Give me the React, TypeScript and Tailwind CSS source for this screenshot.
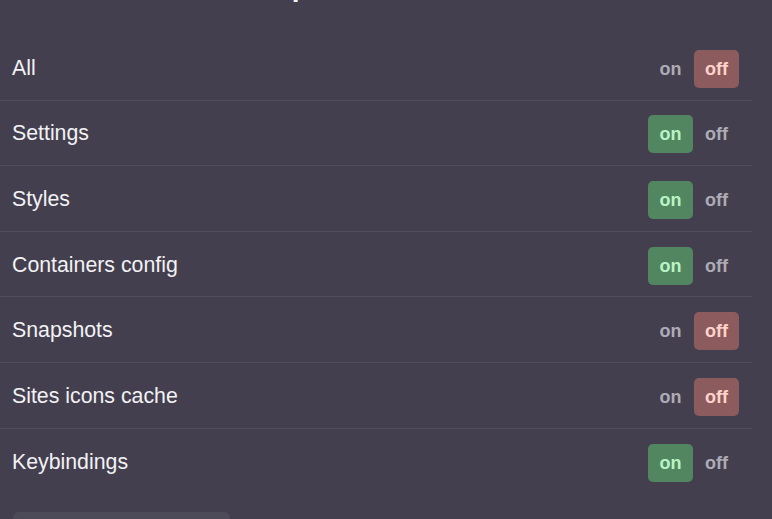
import { useState } from "react";

type Item = { label: string; on: boolean };

const initial: Item[] = [
  { label: "All", on: false },
  { label: "Settings", on: true },
  { label: "Styles", on: true },
  { label: "Containers config", on: true },
  { label: "Snapshots", on: false },
  { label: "Sites icons cache", on: false },
  { label: "Keybindings", on: true },
];

function OnOff({ on, onChange }: { on: boolean; onChange: (v: boolean) => void }) {
  return (
    <div className="mt-[3px] flex items-center gap-px text-[18px] font-bold leading-none">
      <button
        className={
          on
            ? "flex h-[38px] w-[45px] items-center justify-center rounded-[5px] bg-[#518661] text-[#b9f3c4]"
            : "flex h-[38px] w-[45px] items-center justify-center rounded-[5px] text-[#aeabb5]"
        }
        onClick={() => onChange(true)}
      >
        on
      </button>
      <button
        className={
          !on
            ? "flex h-[38px] w-[45px] items-center justify-center rounded-[5px] bg-[#8b5b5d] text-[#ffd3cb]"
            : "flex h-[38px] w-[45px] items-center justify-center rounded-[5px] text-[#aeabb5]"
        }
        onClick={() => onChange(false)}
      >
        off
      </button>
    </div>
  );
}

export default function App() {
  const [items, setItems] = useState(initial);

  const setItem = (i: number, v: boolean) =>
    setItems((prev) => prev.map((it, j) => (j === i ? { ...it, on: v } : it)));

  return (
    <div className="h-[519px] w-[772px] overflow-hidden bg-[#433f4f] font-['Liberation_Sans',Arial,sans-serif] text-[#f2f2f4]">
      <div className="w-[752px]">
        <h2 className="-mt-[29px] h-[32px] pl-[259px] text-[28px] font-bold leading-[32px]">Import</h2>
        <div className="mt-[32px]">
          {items.map((it, i) => (
            <div
              key={it.label}
              className={
                i < items.length - 1
                  ? "flex h-[65.6px] items-center justify-between border-b border-[#504c5d] pl-3 pr-[13px]"
                  : "flex h-[65.6px] items-center justify-between pl-3 pr-[13px]"
              }
            >
              <span className="mt-[3px] text-[21.3px]">{it.label}</span>
              <OnOff on={it.on} onChange={(v) => setItem(i, v)} />
            </div>
          ))}
        </div>
        <div className="ml-[13px] mt-[18px] h-[40px] w-[217px] rounded-[6px] bg-[#4e4b59]" />
      </div>
    </div>
  );
}
